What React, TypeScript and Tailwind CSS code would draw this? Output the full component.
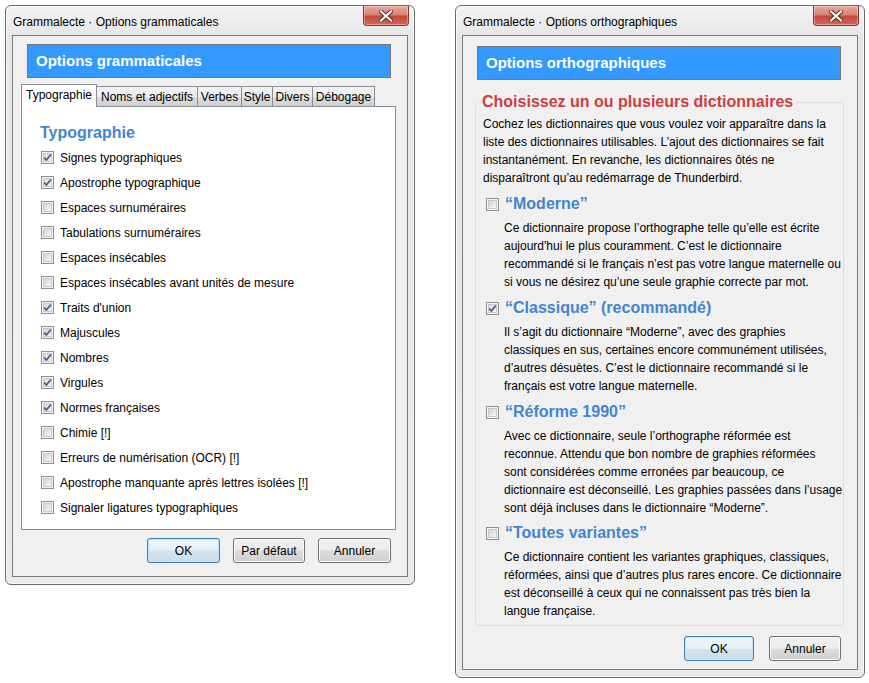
import React from "react";

function CheckBox({ checked }: { checked?: boolean }) {
  return (
    <span className="relative inline-block h-[13px] w-[13px] shrink-0 border border-[#8e8f8f] bg-[#f4f4f4]">
      <span className="absolute inset-[1px] border border-[#c9c9c9] bg-[linear-gradient(135deg,#d6d6d6,#f5f5f5)]" />
      {checked && (
        <svg className="absolute left-0 top-0" width="11" height="11" viewBox="0 0 11 11">
          <path d="M2.2 5.6 L4.4 8 L8.8 2.6" fill="none" stroke="#4a5b91" strokeWidth="1.7" />
        </svg>
      )}
    </span>
  );
}

function CloseButton() {
  return (
    <div className="absolute right-[5px] top-0 flex h-[20px] w-[46px] items-center justify-center rounded-b-[4px] border border-t-0 border-[#7d3a33] bg-[linear-gradient(180deg,#e9a99e_0%,#d98274_45%,#c4493b_55%,#d0675a_100%)] shadow-[inset_0_0_0_1px_rgba(255,255,255,0.35)]">
      <svg width="14" height="12" viewBox="0 0 14 12">
        <path d="M2 1.5 L12 10.5 M12 1.5 L2 10.5" stroke="#5a2622" strokeWidth="4" strokeLinecap="square" />
        <path d="M2 1.5 L12 10.5 M12 1.5 L2 10.5" stroke="#ffffff" strokeWidth="2.2" strokeLinecap="square" />
      </svg>
    </div>
  );
}

function Window({ title, children }: { title: string; children: React.ReactNode }) {
  return (
    <div className="w-[410px] rounded-[6px] border border-[#6a6a6a] bg-[linear-gradient(180deg,#f4f4f4_0px,#e6e6e6_30px,#e9e9e9_100%)] shadow-[inset_0_0_0_1px_rgba(255,255,255,0.7)]">
      <div className="relative flex h-[29px] items-center pl-[7px] pt-[2px] text-[12px] text-black">
        {title}
        <CloseButton />
      </div>
      <div className="mx-[6px] mb-[7px] border border-[#7b7b7b] bg-[#f0f0f0]">{children}</div>
    </div>
  );
}

function Header({ text }: { text: string }) {
  return (
    <div className="ml-[14px] flex h-[34px] w-[364px] items-center border border-[#767676] bg-[#3399ff] pl-[8px] text-[15px] font-bold text-white">
      {text}
    </div>
  );
}

function Button({ label, def, w }: { label: string; def?: boolean; w: string }) {
  return (
    <div
      className={
        "flex h-[25px] items-center justify-center rounded-[3px] border text-[12px] text-black " +
        w +
        " " +
        (def
          ? "border-[#3c7fb1] bg-[linear-gradient(180deg,#f0f6fa_0%,#e6eff6_50%,#d5e3ee_50%,#ccdce9_100%)] shadow-[inset_0_0_0_1px_#bfe3f8]"
          : "border-[#707070] bg-[linear-gradient(180deg,#f2f2f2_0%,#ebebeb_50%,#dddddd_50%,#cfcfcf_100%)] shadow-[inset_0_0_0_1px_#fbfbfb]")
      }
    >
      {label}
    </div>
  );
}

const tabs: { label: string; w: string }[] = [
  { label: "Typographie", w: "w-[76px]" },
  { label: "Noms et adjectifs", w: "w-[102px]" },
  { label: "Verbes", w: "w-[45px]" },
  { label: "Style", w: "w-[32px]" },
  { label: "Divers", w: "w-[41px]" },
  { label: "Débogage", w: "w-[63px]" },
];

const options: { label: string; checked?: boolean }[] = [
  { label: "Signes typographiques", checked: true },
  { label: "Apostrophe typographique", checked: true },
  { label: "Espaces surnuméraires" },
  { label: "Tabulations surnuméraires" },
  { label: "Espaces insécables" },
  { label: "Espaces insécables avant unités de mesure" },
  { label: "Traits d'union", checked: true },
  { label: "Majuscules", checked: true },
  { label: "Nombres", checked: true },
  { label: "Virgules", checked: true },
  { label: "Normes françaises", checked: true },
  { label: "Chimie [!]" },
  { label: "Erreurs de numérisation (OCR) [!]" },
  { label: "Apostrophe manquante après lettres isolées [!]" },
  { label: "Signaler ligatures typographiques" },
];

const dicts: { title: string; checked?: boolean; lines: string[]; mt: string }[] = [
  {
    title: "“Moderne”",
    mt: "mt-[5px]",
    lines: [
      "Ce dictionnaire propose l’orthographe telle qu’elle est écrite",
      "aujourd'hui le plus couramment. C’est le dictionnaire",
      "recommandé si le français n’est pas votre langue maternelle ou",
      "si vous ne désirez qu’une seule graphie correcte par mot.",
    ],
  },
  {
    title: "“Classique” (recommandé)",
    checked: true,
    mt: "mt-[5px]",
    lines: [
      "Il s’agit du dictionnaire “Moderne”, avec des graphies",
      "classiques en sus, certaines encore communément utilisées,",
      "d’autres désuètes. C’est le dictionnaire recommandé si le",
      "français est votre langue maternelle.",
    ],
  },
  {
    title: "“Réforme 1990”",
    mt: "mt-[5px]",
    lines: [
      "Avec ce dictionnaire, seule l’orthographe réformée est",
      "reconnue. Attendu que bon nombre de graphies réformées",
      "sont considérées comme erronées par beaucoup, ce",
      "dictionnaire est déconseillé. Les graphies passées dans l’usage",
      "sont déjà incluses dans le dictionnaire “Moderne”.",
    ],
  },
  {
    title: "“Toutes variantes”",
    mt: "mt-[4px]",
    lines: [
      "Ce dictionnaire contient les variantes graphiques, classiques,",
      "réformées, ainsi que d’autres plus rares encore. Ce dictionnaire",
      "est déconseillé à ceux qui ne connaissent pas très bien la",
      "langue française.",
    ],
  },
];

const intro = [
  "Cochez les dictionnaires que vous voulez voir apparaître dans la",
  "liste des dictionnaires utilisables. L’ajout des dictionnaires se fait",
  "instantanément. En revanche, les dictionnaires ôtés ne",
  "disparaîtront qu’au redémarrage de Thunderbird.",
];

export default function App() {
  return (
    <div className="flex min-h-[683px] items-start gap-[40px] bg-white pl-[5px] pt-[5px] font-['Liberation_Sans',Arial,sans-serif] text-[12px] text-black">
      <Window title="Grammalecte · Options grammaticales">
        <div className="pb-[13px] pt-[8px]">
          <Header text="Options grammaticales" />
          <div className="ml-[8px] mt-[6px] flex h-[22px] items-end">
            {tabs.map((t, i) =>
              i === 0 ? (
                <div
                  key={t.label}
                  className={"relative z-10 -mb-px flex h-[23px] items-center justify-center border border-b-0 border-[#898c95] bg-white pb-[2px] text-[12px] " + t.w}
                >
                  {t.label}
                </div>
              ) : (
                <div
                  key={t.label}
                  className={"-ml-px flex h-[20px] items-center justify-center border border-b-0 border-[#898c95] bg-[linear-gradient(180deg,#f3f3f3_0%,#ebebeb_50%,#dddddd_50%,#cfcfcf_100%)] text-[12px] " + t.w}
                >
                  {t.label}
                </div>
              )
            )}
          </div>
          <div className="ml-[8px] w-[375px] border border-[#898c95] bg-white pb-[9px] pl-[18px] pt-[13px]">
            <div className="flex h-[25px] items-center text-[16px] font-bold text-[#4384d0]">Typographie</div>
            {options.map((o) => (
              <div key={o.label} className="flex h-[25px] items-center gap-[6px] pl-[1px]">
                <CheckBox checked={o.checked} />
                <span>{o.label}</span>
              </div>
            ))}
          </div>
          <div className="mr-[16px] mt-[8px] flex justify-end gap-[13px]">
            <Button label="OK" def w="w-[73px]" />
            <Button label="Par défaut" w="w-[72px]" />
            <Button label="Annuler" w="w-[73px]" />
          </div>
        </div>
      </Window>

      <Window title="Grammalecte · Options orthographiques">
        <div className="pb-[8px] pt-[10px]">
          <Header text="Options orthographiques" />
          <fieldset className="ml-[12px] mt-[12px] w-[369px] rounded-[3px] border border-[#d5dfe5] pb-[5px] pl-[7px]">
            <legend className="-ml-[4px] px-[3px] text-[16px] font-bold leading-[20px] text-[#c8413f]">
              Choisissez un ou plusieurs dictionnaires
            </legend>
            <div className="mt-[3px] leading-[18px]">
              {intro.map((l) => (
                <div key={l} className="whitespace-nowrap">
                  {l}
                </div>
              ))}
            </div>
            {dicts.map((d) => (
              <div key={d.title} className={d.mt}>
                <div className="flex h-[24px] items-center gap-[6px] pl-[3px]">
                  <CheckBox checked={d.checked} />
                  <span className="text-[16px] font-bold text-[#4384d0]">{d.title}</span>
                </div>
                <div className="mt-[3px] pl-[21px] leading-[18px]">
                  {d.lines.map((l) => (
                    <div key={l} className="whitespace-nowrap">
                      {l}
                    </div>
                  ))}
                </div>
              </div>
            ))}
          </fieldset>
          <div className="mr-[16px] mt-[10px] flex justify-end gap-[15px]">
            <Button label="OK" def w="w-[70px]" />
            <Button label="Annuler" w="w-[72px]" />
          </div>
        </div>
      </Window>
    </div>
  );
}
